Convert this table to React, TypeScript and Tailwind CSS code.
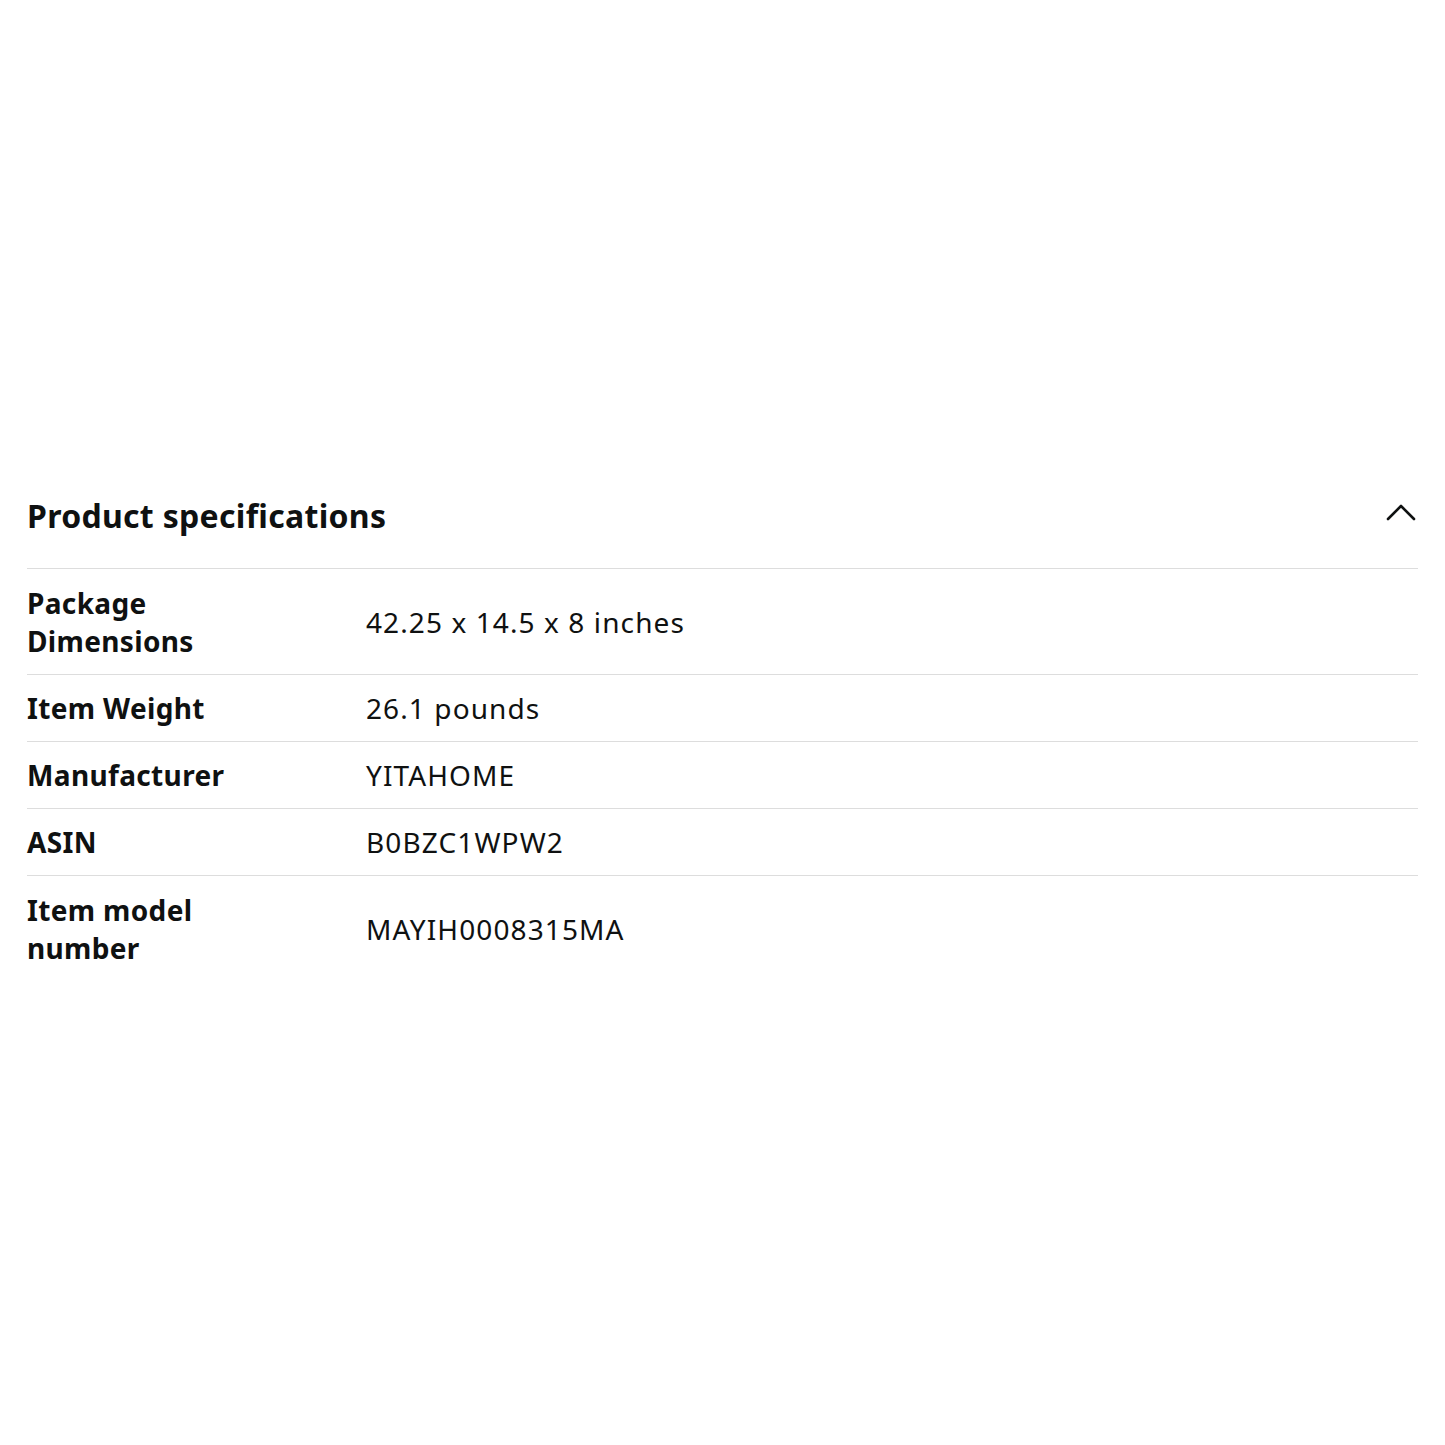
const specs = [
  { label: 'Package Dimensions', value: '42.25 x 14.5 x 8 inches', wrap: true },
  { label: 'Item Weight', value: '26.1 pounds' },
  { label: 'Manufacturer', value: 'YITAHOME' },
  { label: 'ASIN', value: 'B0BZC1WPW2' },
  { label: 'Item model number', value: 'MAYIH0008315MA', wrap: true },
];

export default function App() {
  return (
    <div
      className="min-h-[1445px] bg-white pt-[492px] pl-[27px] pr-[27px] text-[#0f1111]"
      style={{ fontFamily: '"Noto Sans", "Open Sans", sans-serif' }}
    >
      {/* Header */}
      <div className="flex items-center justify-between h-[48px] mb-[28px]">
        <h2 className="text-[32px] font-bold leading-[48px] tracking-[0.3px]">Product specifications</h2>
        <svg width="32" height="20" viewBox="0 0 32 20" className="mr-[1px] -mt-[9px]" fill="none">
          <polyline
            points="3,17 16,4 29,17"
            stroke="#0f1111"
            strokeWidth="2.6"
            strokeLinecap="round"
            strokeLinejoin="round"
          />
        </svg>
      </div>

      {/* Specs table */}
      <div className="border-t border-[#dddddd]">
        {specs.map((s, i) => (
          <div
            key={s.label}
            className={`flex items-center py-[14px] ${
              i < specs.length - 1 ? 'border-b border-[#dddddd]' : ''
            } ${s.wrap ? 'min-h-[106px]' : ''}`}
          >
            <div className="w-[339px] pr-4 text-[28px] font-bold leading-[38px] tracking-[0.35px]">
              {s.wrap ? (
                <>
                  {s.label.split(' ').slice(0, -1).join(' ')}
                  <br />
                  {s.label.split(' ').slice(-1)}
                </>
              ) : (
                s.label
              )}
            </div>
            <div className="text-[28px] leading-[38px] tracking-[1.1px]">{s.value}</div>
          </div>
        ))}
      </div>
    </div>
  );
}
